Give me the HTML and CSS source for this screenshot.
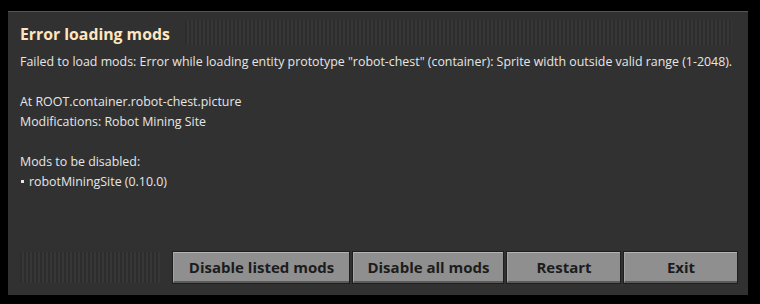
FILE: index.html
```html
<!DOCTYPE html>
<html lang="en">
<head>
<meta charset="UTF-8" />
<title>Error loading mods</title>
<link rel="stylesheet" href="styles.css">
</head>
<body>

<div class="dialog">
  <div class="titlebar">
    <h1>Error loading mods</h1>
    <div class="grip"></div>
  </div>

  <div class="message">
    <p>Failed to load mods: Error while loading entity prototype "robot-chest" (container): Sprite width outside valid range (1-2048).</p>
    <p class="gap">At ROOT.container.robot-chest.picture</p>
    <p>Modifications: Robot Mining Site</p>
    <p class="gap">Mods to be disabled:</p>
    <p><span class="bullet"></span>robotMiningSite (0.10.0)</p>
  </div>

  <div class="actions">
    <div class="grip low"></div>
    <button class="btn wide">Disable listed mods</button>
    <button class="btn mid">Disable all mods</button>
    <button class="btn small">Restart</button>
    <button class="btn small">Exit</button>
  </div>
</div>

</body>
</html>
```

FILE: styles.css
```css
body {
  background: #000;
  margin: 0;
  font-family: "Open Sans", sans-serif;
}
.dialog {
  margin: 11px 0 0 8px;
  width: 740px;
  height: 284px;
  box-sizing: border-box;
  background: #313131;
  border-top: 1px solid #555;
  padding: 8px 12px 12px 12px;
  display: flex;
  flex-direction: column;
}
.titlebar {
  display: flex;
  align-items: center;
  height: 25px;
}
h1 {
  margin: 0;
  font-size: 15.8px;
  font-weight: bold;
  color: #ffe6c0;
  white-space: nowrap;
  padding-top: 2px;
}
.grip {
  flex: 1;
  align-self: stretch;
  margin-left: 15px;
  margin-right: 4px;
  background: repeating-linear-gradient(90deg, #2d2d2d 0 2px, #373737 2px 4px);
}
.message {
  margin-top: 7px;
  flex: 1;
  color: #e6e6e6;
  font-size: 12.4px;
  line-height: 20px;
}
.message p {
  margin: 0;
}
.message .gap {
  margin-top: 20px;
}
.bullet {
  display: inline-block;
  width: 3px;
  height: 3px;
  background: #e6e6e6;
  margin: 0 5px 2px 1px;
  vertical-align: middle;
}
.actions {
  display: flex;
  align-items: stretch;
  height: 31px;
  gap: 4px;
}
.grip.low {
  flex: none;
  width: 140px;
  margin: 0 9px 0 0;
}
.btn {
  flex: none;
  font-family: "Open Sans", sans-serif;
  font-size: 15px;
  font-weight: bold;
  color: #1c1c1c;
  background: #8f8f8f;
  border: none;
  border-top: 1px solid #b4b4b4;
  border-left: 1px solid #a4a4a4;
  border-bottom: 2px solid #5a5a5a;
  box-shadow: 0 0 0 1px #1e1e1e;
  padding: 0;
}
.wide {
  width: 176px;
}
.mid {
  width: 150px;
}
.small {
  width: 113px;
}
```
